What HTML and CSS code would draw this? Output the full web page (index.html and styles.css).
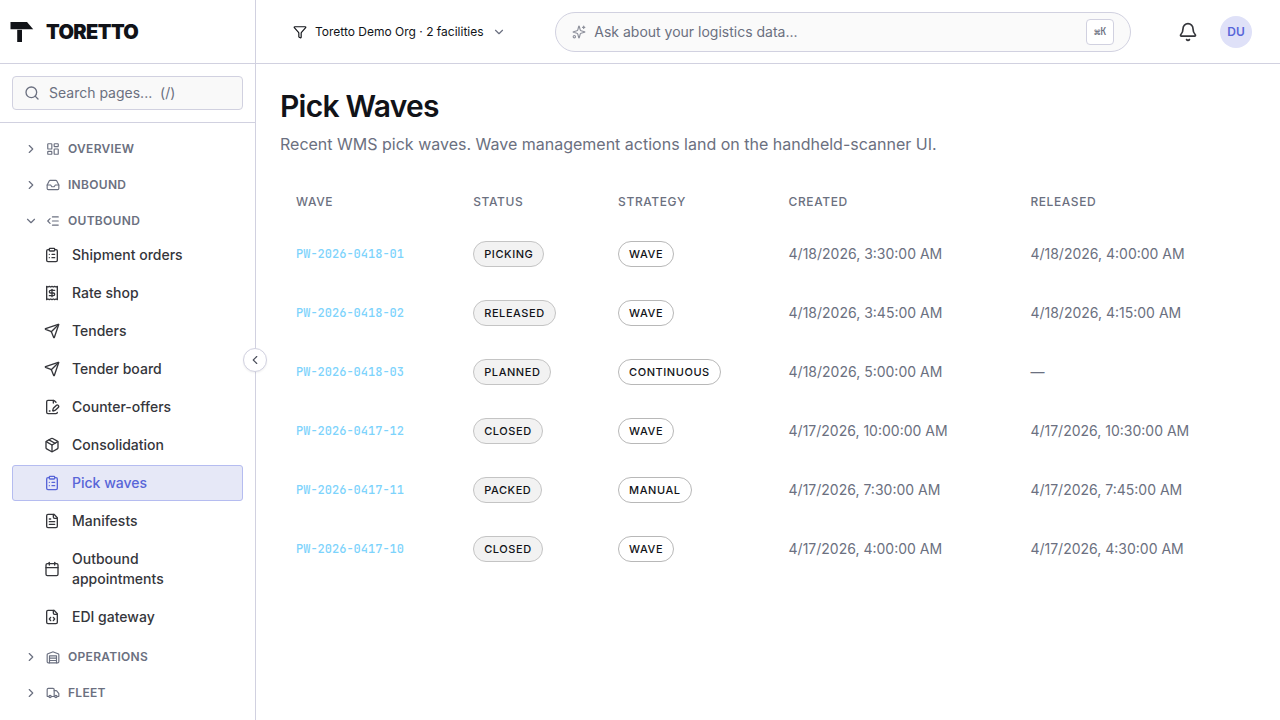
FILE: index.html
```
<!DOCTYPE html>
<html lang="en">
<head>
<meta charset="utf-8">
<meta name="viewport" content="width=device-width, initial-scale=1">
<title>Pick Waves · Toretto</title>
<link rel="stylesheet" href="styles.css">
</head>
<body>
<svg class="sprite" aria-hidden="true">
  <symbol id="chevron-right" viewBox="0 0 24 24"><path d="m9 18 6-6-6-6"/></symbol>
  <symbol id="chevron-left" viewBox="0 0 24 24"><path d="m15 18-6-6 6-6"/></symbol>
  <symbol id="chevron-down" viewBox="0 0 24 24"><path d="m6 9 6 6 6-6"/></symbol>
  <symbol id="search" viewBox="0 0 24 24"><circle cx="11" cy="11" r="8"/><path d="m21 21-4.3-4.3"/></symbol>
  <symbol id="dashboard" viewBox="0 0 24 24"><rect x="3" y="3" width="7" height="9" rx="1"/><rect x="14" y="3" width="7" height="5" rx="1"/><rect x="14" y="12" width="7" height="9" rx="1"/><rect x="3" y="16" width="7" height="5" rx="1"/></symbol>
  <symbol id="inbox" viewBox="0 0 24 24"><path d="M22 12h-6l-2 3h-4l-2-3H2"/><path d="M5.450 5.110 2 12v6a2 2 0 0 0 2 2h16a2 2 0 0 0 2-2v-6l-3.450-6.890A2 2 0 0 0 16.760 4H7.240a2 2 0 0 0-1.790 1.110z"/></symbol>
  <symbol id="outdent" viewBox="0 0 24 24"><path d="M21 12H11"/><path d="M21 19H11"/><path d="M21 5H11"/><path d="m7 8-4 4 4 4"/></symbol>
  <symbol id="clipboard" viewBox="0 0 24 24"><rect x="8" y="2" width="8" height="4" rx="1"/><path d="M16 4h2a2 2 0 0 1 2 2v14a2 2 0 0 1-2 2H6a2 2 0 0 1-2-2V6a2 2 0 0 1 2-2h2"/><path d="M12 11h4"/><path d="M12 16h4"/><path d="M8 11h.01"/><path d="M8 16h.01"/></symbol>
  <symbol id="receipt" viewBox="0 0 24 24"><path d="M4 2v20l2-1 2 1 2-1 2 1 2-1 2 1 2-1 2 1V2l-2 1-2-1-2 1-2-1-2 1-2-1-2 1Z"/><path d="M16 8h-6a2 2 0 1 0 0 4h4a2 2 0 1 1 0 4H8"/><path d="M12 17.500v-11"/></symbol>
  <symbol id="send" viewBox="0 0 24 24"><path d="M14.536 21.686a.5.5 0 0 0 .937-.024l6.500-19a.496.496 0 0 0-.635-.635l-19 6.500a.5.5 0 0 0-.024.937l7.930 3.180a2 2 0 0 1 1.112 1.110z"/><path d="m21.854 2.147-10.940 10.939"/></symbol>
  <symbol id="file-pen" viewBox="0 0 24 24"><path d="m18 5-2.414-2.414A2 2 0 0 0 14.172 2H6a2 2 0 0 0-2 2v16a2 2 0 0 0 2 2h12a2 2 0 0 0 2-2"/><path d="M14 2v4"/><path d="M21.378 12.626a1 1 0 0 0-3.004-3.004l-4.010 4.012a2 2 0 0 0-.506.854l-.837 2.870a.5.5 0 0 0 .620.620l2.870-.837a2 2 0 0 0 .854-.506z"/><path d="M8 18h1"/></symbol>
  <symbol id="package" viewBox="0 0 24 24"><path d="M11 21.730a2 2 0 0 0 2 0l7-4A2 2 0 0 0 21 16V8a2 2 0 0 0-1-1.730l-7-4a2 2 0 0 0-2 0l-7 4A2 2 0 0 0 3 8v8a2 2 0 0 0 1 1.730z"/><path d="M12 22V12"/><path d="M3.300 7 12 12l8.700-5"/><path d="m7.500 4.270 9 5.150"/></symbol>
  <symbol id="file-text" viewBox="0 0 24 24"><path d="M15 2H6a2 2 0 0 0-2 2v16a2 2 0 0 0 2 2h12a2 2 0 0 0 2-2V7Z"/><path d="M14 2v4a2 2 0 0 0 2 2h4"/><path d="M10 9H8"/><path d="M16 13H8"/><path d="M16 17H8"/></symbol>
  <symbol id="calendar" viewBox="0 0 24 24"><path d="M8 2v4"/><path d="M16 2v4"/><rect x="3" y="4" width="18" height="18" rx="2"/><path d="M3 10h18"/></symbol>
  <symbol id="file-code" viewBox="0 0 24 24"><path d="M15 2H6a2 2 0 0 0-2 2v16a2 2 0 0 0 2 2h12a2 2 0 0 0 2-2V7Z"/><path d="M14 2v4a2 2 0 0 0 2 2h4"/><path d="m10 12.500-2 2.500 2 2.500"/><path d="m14 12.500 2 2.500-2 2.500"/></symbol>
  <symbol id="warehouse" viewBox="0 0 24 24"><path d="M22 8.350V20a2 2 0 0 1-2 2H4a2 2 0 0 1-2-2V8.350A2 2 0 0 1 3.260 6.500l8-3.200a2 2 0 0 1 1.480 0l8 3.200A2 2 0 0 1 22 8.350Z"/><path d="M6 18h12"/><path d="M6 14h12"/><path d="M6 22V10h12v12"/></symbol>
  <symbol id="truck" viewBox="0 0 24 24"><path d="M14 18V6a2 2 0 0 0-2-2H4a2 2 0 0 0-2 2v11a1 1 0 0 0 1 1h2"/><path d="M15 18H9"/><path d="M19 18h2a1 1 0 0 0 1-1v-3.650a1 1 0 0 0-.220-.624l-3.480-4.350A1 1 0 0 0 17.520 8H14"/><circle cx="17" cy="18" r="2"/><circle cx="7" cy="18" r="2"/></symbol>
  <symbol id="funnel" viewBox="0 0 24 24"><path d="M10 20a1 1 0 0 0 .553.895l2 1A1 1 0 0 0 14 21v-7a2 2 0 0 1 .517-1.341L21.740 4.670A1 1 0 0 0 21 3H3a1 1 0 0 0-.742 1.670l7.225 7.989A2 2 0 0 1 10 14z"/></symbol>
  <symbol id="sparkles" viewBox="0 0 24 24"><path d="M9.937 15.500A2 2 0 0 0 8.500 14.063l-6.135-1.582a.5.5 0 0 1 0-.962L8.500 9.936A2 2 0 0 0 9.937 8.500l1.582-6.135a.5.5 0 0 1 .963 0L14.063 8.500A2 2 0 0 0 15.500 9.937l6.135 1.581a.5.5 0 0 1 0 .964L15.500 14.063a2 2 0 0 0-1.437 1.437l-1.582 6.135a.5.5 0 0 1-.963 0z"/><path d="M20 2v4"/><path d="M22 4h-4"/><circle cx="4" cy="20" r="2"/></symbol>
  <symbol id="bell" viewBox="0 0 24 24"><path d="M10.268 21a2 2 0 0 0 3.464 0"/><path d="M3.262 15.326A1 1 0 0 0 4 17h16a1 1 0 0 0 .740-1.673C19.410 13.956 18 12.499 18 8A6 6 0 0 0 6 8c0 4.499-1.411 5.956-2.738 7.326"/></symbol>
</svg>

<div class="app">
  <aside class="sidebar">
    <a class="brand" href="#">
      <svg class="brand-mark" viewBox="0 0 24 22" aria-hidden="true"><path d="M0.500 1H17L23.200 8.200H0.500Z"/><path d="M7.200 8.800H12V21H7.200Z"/></svg>
      <span class="brand-name">TORETTO</span>
    </a>
    <div class="page-search">
      <label class="search-box">
        <svg class="icon icon-md"><use href="#search"/></svg>
        <input class="search-input" type="search" placeholder="Search pages...  (/)" aria-label="Search pages">
      </label>
    </div>
    <nav class="nav" aria-label="Main">
      <button class="group" type="button" aria-expanded="false"><svg class="icon icon-sm"><use href="#chevron-right"/></svg><svg class="icon icon-sm"><use href="#dashboard"/></svg>OVERVIEW</button>
      <button class="group" type="button" aria-expanded="false"><svg class="icon icon-sm"><use href="#chevron-right"/></svg><svg class="icon icon-sm"><use href="#inbox"/></svg>INBOUND</button>
      <div class="section">
        <button class="group" type="button" aria-expanded="true"><svg class="icon icon-sm"><use href="#chevron-down"/></svg><svg class="icon icon-sm"><use href="#outdent"/></svg>OUTBOUND</button>
        <div class="items">
          <a class="item" href="#"><svg class="icon icon-md"><use href="#clipboard"/></svg>Shipment orders</a>
          <a class="item" href="#"><svg class="icon icon-md"><use href="#receipt"/></svg>Rate shop</a>
          <a class="item" href="#"><svg class="icon icon-md"><use href="#send"/></svg>Tenders</a>
          <a class="item" href="#"><svg class="icon icon-md"><use href="#send"/></svg>Tender board</a>
          <a class="item" href="#"><svg class="icon icon-md"><use href="#file-pen"/></svg>Counter-offers</a>
          <a class="item" href="#"><svg class="icon icon-md"><use href="#package"/></svg>Consolidation</a>
          <a class="item active" href="#" aria-current="page"><svg class="icon icon-md"><use href="#clipboard"/></svg>Pick waves</a>
          <a class="item" href="#"><svg class="icon icon-md"><use href="#file-text"/></svg>Manifests</a>
          <a class="item" href="#"><svg class="icon icon-md"><use href="#calendar"/></svg>Outbound appointments</a>
          <a class="item" href="#"><svg class="icon icon-md"><use href="#file-code"/></svg>EDI gateway</a>
        </div>
      </div>
      <button class="group" type="button" aria-expanded="false"><svg class="icon icon-sm"><use href="#chevron-right"/></svg><svg class="icon icon-sm"><use href="#warehouse"/></svg>OPERATIONS</button>
      <button class="group" type="button" aria-expanded="false"><svg class="icon icon-sm"><use href="#chevron-right"/></svg><svg class="icon icon-sm"><use href="#truck"/></svg>FLEET</button>
    </nav>
    <button class="collapse" type="button" aria-label="Collapse sidebar"><svg class="icon icon-sm"><use href="#chevron-left"/></svg></button>
  </aside>

  <div class="main">
    <header class="topbar">
      <button class="scope" type="button"><svg class="icon icon-sm"><use href="#funnel"/></svg><span>Toretto Demo Org · 2 facilities</span><svg class="icon icon-sm scope-chevron"><use href="#chevron-down"/></svg></button>
      <div class="ask-wrap">
        <label class="ask">
          <svg class="icon icon-sm ask-icon"><use href="#sparkles"/></svg>
          <input class="ask-input" type="text" placeholder="Ask about your logistics data..." aria-label="Ask about your logistics data">
          <kbd class="kbd">⌘K</kbd>
        </label>
      </div>
      <button class="bell" type="button" aria-label="Notifications"><svg class="icon icon-lg"><use href="#bell"/></svg></button>
      <button class="avatar" type="button">DU</button>
    </header>
    <main class="content">
      <h1 class="title">Pick Waves</h1>
      <p class="subtitle">Recent WMS pick waves. Wave management actions land on the handheld-scanner UI.</p>
      <table class="waves">
        <thead><tr><th>WAVE</th><th>STATUS</th><th>STRATEGY</th><th>CREATED</th><th>RELEASED</th></tr></thead>
        <tbody>
          <tr><td><a class="code" href="#">PW-2026-0418-01</a></td><td><span class="pill filled">PICKING</span></td><td><span class="pill">WAVE</span></td><td>4/18/2026, 3:30:00 AM</td><td>4/18/2026, 4:00:00 AM</td></tr>
          <tr><td><a class="code" href="#">PW-2026-0418-02</a></td><td><span class="pill filled">RELEASED</span></td><td><span class="pill">WAVE</span></td><td>4/18/2026, 3:45:00 AM</td><td>4/18/2026, 4:15:00 AM</td></tr>
          <tr><td><a class="code" href="#">PW-2026-0418-03</a></td><td><span class="pill filled">PLANNED</span></td><td><span class="pill">CONTINUOUS</span></td><td>4/18/2026, 5:00:00 AM</td><td>—</td></tr>
          <tr><td><a class="code" href="#">PW-2026-0417-12</a></td><td><span class="pill filled">CLOSED</span></td><td><span class="pill">WAVE</span></td><td>4/17/2026, 10:00:00 AM</td><td>4/17/2026, 10:30:00 AM</td></tr>
          <tr><td><a class="code" href="#">PW-2026-0417-11</a></td><td><span class="pill filled">PACKED</span></td><td><span class="pill">MANUAL</span></td><td>4/17/2026, 7:30:00 AM</td><td>4/17/2026, 7:45:00 AM</td></tr>
          <tr><td><a class="code" href="#">PW-2026-0417-10</a></td><td><span class="pill filled">CLOSED</span></td><td><span class="pill">WAVE</span></td><td>4/17/2026, 4:00:00 AM</td><td>4/17/2026, 4:30:00 AM</td></tr>
        </tbody>
      </table>
    </main>
  </div>
</div>
</body>
</html>
```
FILE: styles.css
```
:root {
  --line: #d1d1e0;
  --muted: #6b7080;
  --ink: #111318;
  --accent: #5865d8;
}

* { box-sizing: border-box; }

body {
  margin: 0;
  font-family: Inter, "Liberation Sans", sans-serif;
  font-size: 14px;
  line-height: 20px;
  color: var(--ink);
  background: #fff;
}

button, input { font: inherit; color: inherit; }
button { border: 0; background: none; padding: 0; cursor: pointer; }
a { color: inherit; text-decoration: none; }

.sprite { display: none; }
.icon {
  flex: none;
  fill: none;
  stroke: currentColor;
  stroke-width: 2;
  stroke-linecap: round;
  stroke-linejoin: round;
}
.icon-sm { width: 14px; height: 14px; }
.icon-md { width: 16px; height: 16px; }
.icon-lg { width: 20px; height: 20px; }

.app { display: flex; height: 100vh; }

.sidebar {
  position: relative;
  flex: none;
  width: 256px;
  display: flex;
  flex-direction: column;
  border-right: 1px solid var(--line);
}

.brand {
  flex: none;
  height: 64px;
  display: flex;
  align-items: center;
  gap: 12px;
  padding: 1px 10px 0;
  border-bottom: 1px solid var(--line);
}
.brand-mark { width: 24px; height: 22px; fill: var(--ink); }
.brand-name { font-size: 20px; font-weight: 900; letter-spacing: -0.03em; }

.page-search { flex: none; padding: 12px; border-bottom: 1px solid var(--line); }
.search-box {
  display: flex;
  align-items: center;
  gap: 9px;
  height: 34px;
  padding: 0 11px;
  border: 1px solid var(--line);
  border-radius: 4px;
  background: #f9f9f9;
  color: var(--muted);
}
.search-input, .ask-input {
  flex: 1;
  min-width: 0;
  padding: 0;
  border: 0;
  outline: 0;
  background: none;
}
.search-input { appearance: none; white-space: pre; }
.search-input::placeholder, .ask-input::placeholder { color: var(--muted); opacity: 1; }

.nav {
  flex: 1;
  min-height: 0;
  overflow: hidden;
  display: flex;
  flex-direction: column;
  gap: 4px;
  padding: 10px 12px;
}
.group {
  flex: none;
  width: 100%;
  height: 32px;
  display: flex;
  align-items: center;
  gap: 8px;
  padding: 0 12px;
  font-size: 12px;
  font-weight: 600;
  letter-spacing: 0.025em;
  color: var(--muted);
}
.items { display: flex; flex-direction: column; gap: 2px; padding-bottom: 2px; }
.item {
  display: flex;
  align-items: center;
  gap: 12px;
  padding: 7px 31px;
  border: 1px solid transparent;
  border-radius: 3px;
  font-weight: 500;
  color: #35363b;
}
.item.active { background: #e6e8f7; border-color: #b5bcf0; color: var(--accent); }

.collapse {
  position: absolute;
  top: 50%;
  right: -12px;
  width: 24px;
  height: 24px;
  margin-top: -12px;
  display: flex;
  align-items: center;
  justify-content: center;
  border: 1px solid var(--line);
  border-radius: 12px;
  background: #fff;
  color: #4a4e5a;
  box-shadow: 0 1px 2px rgba(0, 0, 0, 0.06);
}

.main { flex: 1; min-width: 0; display: flex; flex-direction: column; }
.topbar {
  flex: none;
  height: 64px;
  display: flex;
  align-items: center;
  gap: 12px;
  padding: 0 28px 0 24px;
  border-bottom: 1px solid var(--line);
}
.scope {
  display: flex;
  align-items: center;
  gap: 8px;
  height: 32px;
  padding: 0 13px;
  font-size: 12px;
  white-space: nowrap;
}
.scope-chevron { color: var(--muted); }
.ask-wrap { flex: 1; display: flex; justify-content: center; }
.ask {
  flex: 1;
  max-width: 576px;
  height: 40px;
  display: flex;
  align-items: center;
  gap: 8px;
  padding: 0 16px;
  border: 1px solid var(--line);
  border-radius: 20px;
  background: #fafafa;
}
.ask-icon { color: #8e919c; }
.kbd {
  height: 26px;
  padding: 0 7px;
  border: 1px solid var(--line);
  border-radius: 4px;
  background: #fff;
  font-family: "JetBrains Mono", "Liberation Mono", monospace;
  font-size: 10px;
  font-weight: 500;
  line-height: 24px;
  color: var(--muted);
}
.bell {
  width: 40px;
  height: 40px;
  display: flex;
  align-items: center;
  justify-content: center;
  color: #35363b;
}
.avatar {
  width: 32px;
  height: 32px;
  border-radius: 16px;
  background: #dfe1f8;
  font-size: 12px;
  font-weight: 600;
  color: var(--accent);
}

.content { flex: 1; padding: 24px; overflow: auto; }
.title { margin: 0; font-size: 30px; line-height: 36px; font-weight: 600; letter-spacing: -0.025em; }
.subtitle { margin: 8px 0 24px; font-size: 16px; line-height: 24px; color: var(--muted); }

.waves { width: 100%; border-collapse: collapse; color: var(--muted); }
.waves th {
  height: 44px;
  padding: 0 16px;
  text-align: left;
  font-size: 12px;
  font-weight: 500;
  letter-spacing: 0.05em;
}
.waves td { height: 59px; padding: 0 16px; white-space: nowrap; }
.code {
  font-family: "JetBrains Mono", "Liberation Mono", monospace;
  font-size: 12px;
  font-weight: 500;
  color: #7dd3fc;
}
.pill {
  display: inline-block;
  padding: 4px 10px;
  border: 1px solid #b8b8b8;
  border-radius: 13px;
  font-size: 11px;
  line-height: 16px;
  font-weight: 500;
  letter-spacing: 0.05em;
  color: var(--ink);
}
.pill.filled { background: #f2f2f2; border-color: #c4c4c4; }
```
